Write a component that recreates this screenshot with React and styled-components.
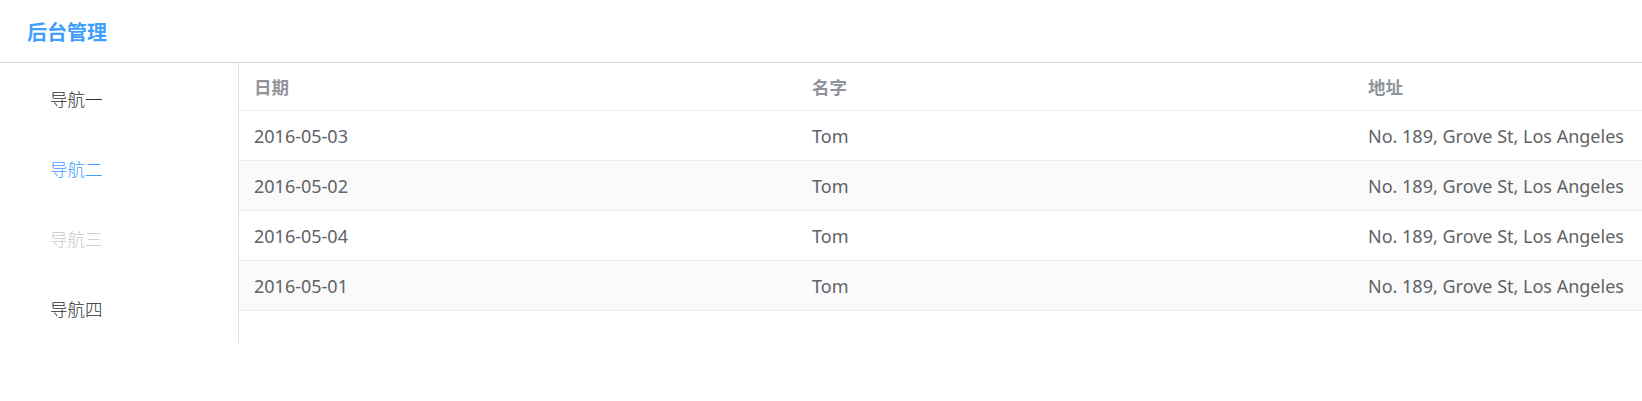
import React from 'react';
import styled, { createGlobalStyle } from 'styled-components';

const GlobalStyle = createGlobalStyle`
  body {
    margin: 0;
    background: #fff;
    font-family: 'Noto Sans', 'Noto Sans CJK SC', sans-serif;
  }
`;

const navItems = [
  { label: '导航一', state: 'normal' },
  { label: '导航二', state: 'active' },
  { label: '导航三', state: 'disabled' },
  { label: '导航四', state: 'normal' },
];

const rows = [
  { date: '2016-05-03', name: 'Tom', address: 'No. 189, Grove St, Los Angeles' },
  { date: '2016-05-02', name: 'Tom', address: 'No. 189, Grove St, Los Angeles' },
  { date: '2016-05-04', name: 'Tom', address: 'No. 189, Grove St, Los Angeles' },
  { date: '2016-05-01', name: 'Tom', address: 'No. 189, Grove St, Los Angeles' },
];

const navColors = {
  normal: '#303133',
  active: '#409eff',
  disabled: '#c8c9cc',
};

export default function App() {
  return (
    <>
      <GlobalStyle />
      <Header>
        <Title>后台管理</Title>
      </Header>
      <Body>
        <Sidebar>
          {navItems.map((item) => (
            <NavItem key={item.label} $state={item.state}>
              {item.label}
            </NavItem>
          ))}
        </Sidebar>
        <Table>
          <HeadRow>
            <HeadCell>日期</HeadCell>
            <HeadCell>名字</HeadCell>
            <HeadCell>地址</HeadCell>
          </HeadRow>
          {rows.map((row, i) => (
            <Row key={row.date} $striped={i % 2 === 1}>
              <Cell>{row.date}</Cell>
              <Cell>{row.name}</Cell>
              <Cell>{row.address}</Cell>
            </Row>
          ))}
        </Table>
      </Body>
    </>
  );
}

const Header = styled.header`
  display: flex;
  align-items: center;
  height: 62px;
  padding-left: 27px;
  border-bottom: 1px solid #d3d4d6;
`;

const Title = styled.h1`
  margin: 0;
  font-size: 20px;
  font-weight: 700;
  color: #409eff;
`;

const Body = styled.div`
  display: flex;
  align-items: flex-start;
`;

const Sidebar = styled.nav`
  display: flex;
  flex-direction: column;
  width: 238px;
  flex-shrink: 0;
  border-right: 1px solid #e2e3e6;
`;

const NavItem = styled.div`
  display: flex;
  align-items: center;
  height: 70px;
  padding-left: 50px;
  font-size: 17.5px;
  font-weight: 300;
  color: ${(p) => navColors[p.$state]};
  cursor: ${(p) => (p.$state === 'disabled' ? 'not-allowed' : 'pointer')};
`;

const Table = styled.div`
  flex: 1;
  display: flex;
  flex-direction: column;
`;

const HeadRow = styled.div`
  display: grid;
  grid-template-columns: 558px 556px 1fr;
  height: 47px;
  border-bottom: 1px solid #ebeef5;
`;

const Row = styled(HeadRow)`
  height: 49px;
  background: ${(p) => (p.$striped ? '#fafafa' : '#fff')};
`;

const HeadCell = styled.div`
  display: flex;
  align-items: center;
  padding-left: 15px;
  font-size: 17.5px;
  font-weight: 700;
  color: #909399;
`;

const Cell = styled(HeadCell)`
  font-size: 18px;
  font-weight: 400;
  color: #606266;
  white-space: nowrap;
`;
